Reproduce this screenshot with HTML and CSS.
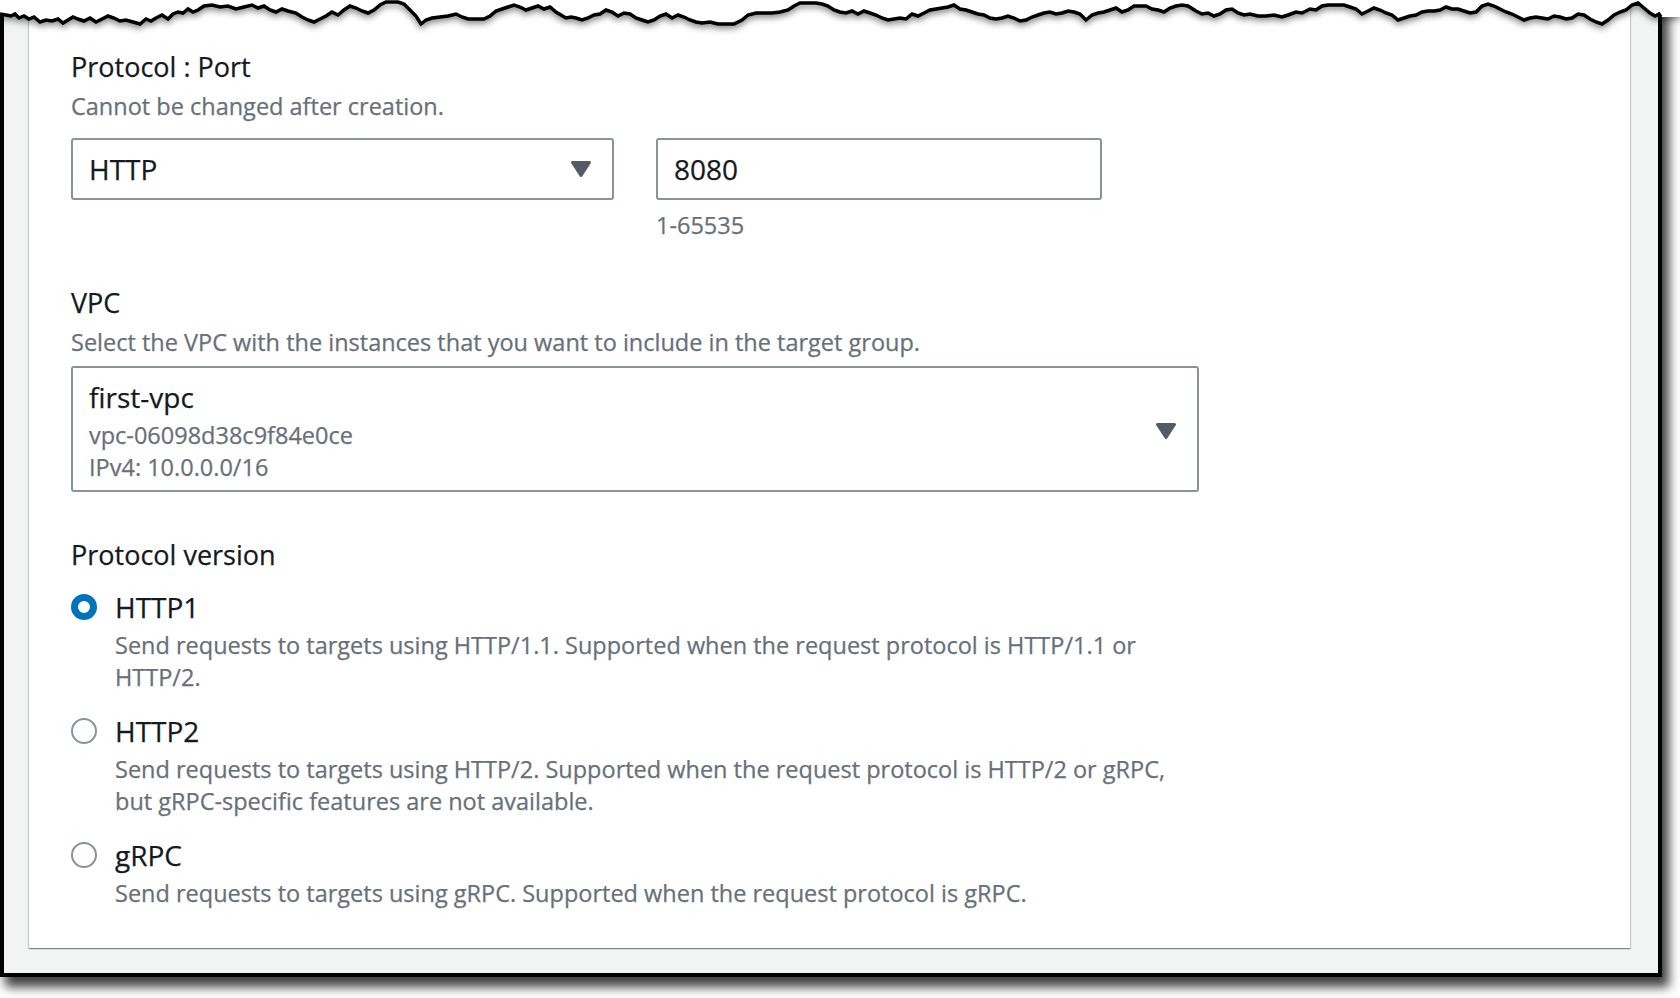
FILE: index.html
```html
<!DOCTYPE html>
<html lang="en">
<head>
<meta charset="utf-8">
<title>Target group settings</title>
<link rel="stylesheet" href="styles.css">
</head>
<body>
<div class="sheet">
  <div class="panel">
    <div class="form">
      <section class="field">
        <div class="label">Protocol : Port</div>
        <div class="desc">Cannot be changed after creation.</div>
        <div class="proto-port">
          <div class="select select-proto">
            <span class="value">HTTP</span>
            <svg class="caret" width="20" height="16" viewBox="0 0 20 16"><polygon points="1.5,1.5 18.5,1.5 10,14.5"/></svg>
          </div>
          <div class="port">
            <div class="input">8080</div>
            <div class="hint">1-65535</div>
          </div>
        </div>
      </section>

      <section class="field field-vpc">
        <div class="label">VPC</div>
        <div class="desc">Select the VPC with the instances that you want to include in the target group.</div>
        <div class="select select-vpc">
          <div class="vpc-text">
            <div class="value">first-vpc</div>
            <div class="vpc-id">vpc-06098d38c9f84e0ce</div>
            <div class="vpc-cidr">IPv4: 10.0.0.0/16</div>
          </div>
          <svg class="caret" width="20" height="16" viewBox="0 0 20 16"><polygon points="1.5,1.5 18.5,1.5 10,14.5"/></svg>
        </div>
      </section>

      <section class="field field-version">
        <div class="label">Protocol version</div>
        <div class="options">
          <div class="option">
            <span class="radio checked"></span>
            <span class="opt-label">HTTP1</span>
            <div class="opt-desc">Send requests to targets using HTTP/1.1. Supported when the request protocol is HTTP/1.1 or HTTP/2.</div>
          </div>
          <div class="option">
            <span class="radio"></span>
            <span class="opt-label">HTTP2</span>
            <div class="opt-desc">Send requests to targets using HTTP/2. Supported when the request protocol is HTTP/2 or gRPC, but gRPC-specific features are not available.</div>
          </div>
          <div class="option">
            <span class="radio"></span>
            <span class="opt-label">gRPC</span>
            <div class="opt-desc">Send requests to targets using gRPC. Supported when the request protocol is gRPC.</div>
          </div>
        </div>
      </section>
    </div>
  </div>

  <svg class="torn" width="1680" height="34" viewBox="0 0 1680 34">
    <polygon class="torn-fill" points="0,0 0,14 6,15 11,16 15,14 19,18 24,16 29,19 34,17 40,22 46,20 52,21 58,19 63,23 68,20 73,17 78,19 84,21 90,18 96,22 102,19 108,16 114,18 120,21 126,20 133,22 140,24 146,19 151,21 156,18 162,15 168,19 173,14 178,12 183,13 188,9 193,12 198,10 204,6 212,5 220,7 228,6 236,9 244,7 252,5 258,8 264,6 270,10 276,12 282,9 288,11 296,13 302,17 308,20 314,22 320,19 326,16 332,12 338,15 344,10 350,6 356,8 362,11 368,13 374,10 380,5 386,2 392,2 398,2 404,4 410,10 416,16 421,24 426,20 432,18 440,17 448,16 456,14 462,17 468,19 476,19 484,19 490,16 496,11 502,9 508,7 514,5 520,7 526,10 532,8 538,6 544,9 550,7 556,12 561,15 566,18 571,17 576,18 582,20 588,18 594,15 600,14 606,10 612,12 618,16 624,13 630,14 636,18 642,20 648,22 654,20 660,16 666,14 672,18 678,15 684,17 690,20 696,22 702,23 710,22 718,24 726,24 734,24 742,20 748,15 756,13 764,13 772,13 780,12 788,10 794,6 800,3 808,3 816,3 822,4 828,6 834,10 840,12 846,13 852,11 858,14 864,11 870,13 876,15 882,18 888,20 894,19 900,18 906,19 912,14 918,16 924,13 930,10 936,9 942,8 948,7 954,5 960,9 966,10 972,12 978,14 984,15 990,18 996,19 1002,18 1008,16 1014,18 1020,21 1026,20 1032,17 1038,15 1044,13 1050,12 1056,14 1062,13 1068,11 1074,12 1080,14 1086,20 1092,15 1098,13 1104,12 1110,10 1116,8 1122,12 1128,10 1134,6 1140,6 1146,6 1152,9 1158,10 1164,12 1170,8 1176,6 1182,5 1188,6 1196,11 1202,14 1208,13 1214,16 1220,14 1226,10 1232,9 1238,13 1244,15 1250,14 1258,16 1266,16 1274,15 1282,17 1288,15 1296,12 1302,13 1310,9 1316,10 1322,6 1328,5 1336,5 1344,5 1350,7 1356,9 1362,14 1368,11 1374,8 1380,10 1386,13 1392,15 1398,20 1404,18 1410,16 1416,15 1422,12 1428,11 1434,11 1440,10 1446,7 1452,9 1458,9 1464,11 1470,13 1476,12 1482,6 1488,4 1494,6 1500,9 1506,12 1512,14 1518,17 1524,20 1530,18 1536,17 1542,18 1548,19 1554,16 1560,17 1566,19 1572,18 1578,14 1584,15 1590,19 1596,22 1602,24 1608,20 1614,15 1620,12 1626,10 1632,5 1638,3 1644,8 1650,13 1655,16 1659,14 1662,17 1680,17 1680,0"/>
    <polyline class="torn-line" points="0,14 6,15 11,16 15,14 19,18 24,16 29,19 34,17 40,22 46,20 52,21 58,19 63,23 68,20 73,17 78,19 84,21 90,18 96,22 102,19 108,16 114,18 120,21 126,20 133,22 140,24 146,19 151,21 156,18 162,15 168,19 173,14 178,12 183,13 188,9 193,12 198,10 204,6 212,5 220,7 228,6 236,9 244,7 252,5 258,8 264,6 270,10 276,12 282,9 288,11 296,13 302,17 308,20 314,22 320,19 326,16 332,12 338,15 344,10 350,6 356,8 362,11 368,13 374,10 380,5 386,2 392,2 398,2 404,4 410,10 416,16 421,24 426,20 432,18 440,17 448,16 456,14 462,17 468,19 476,19 484,19 490,16 496,11 502,9 508,7 514,5 520,7 526,10 532,8 538,6 544,9 550,7 556,12 561,15 566,18 571,17 576,18 582,20 588,18 594,15 600,14 606,10 612,12 618,16 624,13 630,14 636,18 642,20 648,22 654,20 660,16 666,14 672,18 678,15 684,17 690,20 696,22 702,23 710,22 718,24 726,24 734,24 742,20 748,15 756,13 764,13 772,13 780,12 788,10 794,6 800,3 808,3 816,3 822,4 828,6 834,10 840,12 846,13 852,11 858,14 864,11 870,13 876,15 882,18 888,20 894,19 900,18 906,19 912,14 918,16 924,13 930,10 936,9 942,8 948,7 954,5 960,9 966,10 972,12 978,14 984,15 990,18 996,19 1002,18 1008,16 1014,18 1020,21 1026,20 1032,17 1038,15 1044,13 1050,12 1056,14 1062,13 1068,11 1074,12 1080,14 1086,20 1092,15 1098,13 1104,12 1110,10 1116,8 1122,12 1128,10 1134,6 1140,6 1146,6 1152,9 1158,10 1164,12 1170,8 1176,6 1182,5 1188,6 1196,11 1202,14 1208,13 1214,16 1220,14 1226,10 1232,9 1238,13 1244,15 1250,14 1258,16 1266,16 1274,15 1282,17 1288,15 1296,12 1302,13 1310,9 1316,10 1322,6 1328,5 1336,5 1344,5 1350,7 1356,9 1362,14 1368,11 1374,8 1380,10 1386,13 1392,15 1398,20 1404,18 1410,16 1416,15 1422,12 1428,11 1434,11 1440,10 1446,7 1452,9 1458,9 1464,11 1470,13 1476,12 1482,6 1488,4 1494,6 1500,9 1506,12 1512,14 1518,17 1524,20 1530,18 1536,17 1542,18 1548,19 1554,16 1560,17 1566,19 1572,18 1578,14 1584,15 1590,19 1596,22 1602,24 1608,20 1614,15 1620,12 1626,10 1632,5 1638,3 1644,8 1650,13 1655,16 1659,14 1661,17"/>
  </svg>
</div>
</body>
</html>
```

FILE: styles.css
```css
* {
  box-sizing: border-box;
}

html {
  background: #ffffff;
}

body {
  margin: 0;
  padding: 0 18px 21px 0;
  width: 1680px;
  min-height: 998px;
  font-family: "Open Sans", "Noto Sans", "DejaVu Sans", sans-serif;
  color: #16191f;
  -webkit-text-stroke: 0.25px currentColor;
}

/* screenshot "paper" */
.sheet {
  position: relative;
  width: 1662px;
  border: 4px solid #000000;
  border-top: 0;
  background: #f2f3f3;
  padding: 0 28px 25px 25px;
  box-shadow: 6px 9px 10px 1px rgba(0, 0, 0, 0.75);
}

.panel {
  background: #ffffff;
  padding: 49px 0 39px 42px;
  box-shadow: 0 1px 1px 0 rgba(0, 28, 36, 0.3),
    1px 1px 1px 0 rgba(0, 28, 36, 0.15),
    -1px 1px 1px 0 rgba(0, 28, 36, 0.15);
}

.form {
  width: 1128px;
}

.field + .field {
  margin-top: 44px;
}

.field.field-version {
  margin-top: 45px;
}

.label {
  font-size: 27px;
  line-height: 36px;
  color: #16191f;
}

.desc,
.hint,
.vpc-id,
.vpc-cidr,
.opt-desc {
  font-size: 23.5px;
  line-height: 32px;
  color: #687078;
}

.desc {
  margin-top: 5px;
}

/* protocol / port row */
.proto-port {
  display: flex;
  align-items: flex-start;
  gap: 42px;
  margin-top: 16px;
}

.select,
.input {
  border: 2px solid #879596;
  border-radius: 3px;
  background: #ffffff;
  font-size: 28px;
  line-height: 36px;
  color: #16191f;
}

.select {
  display: flex;
  align-items: center;
  justify-content: space-between;
  padding: 0 21px 0 16px;
}

.select-proto {
  width: 543px;
  height: 62px;
}

.input {
  width: 446px;
  height: 62px;
  padding: 0 16px;
  display: flex;
  align-items: center;
}

.hint {
  margin-top: 9px;
}

.caret {
  display: block;
  flex: none;
}

.caret polygon {
  fill: #545b64;
  stroke: #545b64;
  stroke-width: 3;
  stroke-linejoin: round;
}

/* VPC select */
.select-vpc {
  margin-top: 8px;
  height: 126px;
  padding-top: 11px;
  padding-bottom: 7px;
  align-items: center;
}

.vpc-text {
  align-self: flex-start;
}

.vpc-id {
  margin-top: 4px;
}

/* radio group */
.options {
  display: flex;
  flex-direction: column;
  gap: 20px;
  margin-top: 16px;
}

.option {
  display: grid;
  grid-template-columns: 26px 1fr;
  column-gap: 18px;
  align-items: center;
}

.radio {
  width: 26px;
  height: 26px;
  border-radius: 50%;
  border: 2px solid #879596;
  background: #ffffff;
}

.radio.checked {
  border: 7px solid #0073bb;
}

.opt-label {
  font-size: 28px;
  line-height: 36px;
  color: #16191f;
}

.opt-desc {
  grid-column: 2;
  margin-top: 4px;
}

/* torn top edge of the screenshot */
.torn {
  position: absolute;
  top: 0;
  left: -4px;
  overflow: visible;
  filter: drop-shadow(0 3px 3px rgba(0, 0, 0, 0.45));
}

.torn-fill {
  fill: #ffffff;
}

.torn-line {
  fill: none;
  stroke: #000000;
  stroke-width: 3.5;
  stroke-linejoin: miter;
}
```
